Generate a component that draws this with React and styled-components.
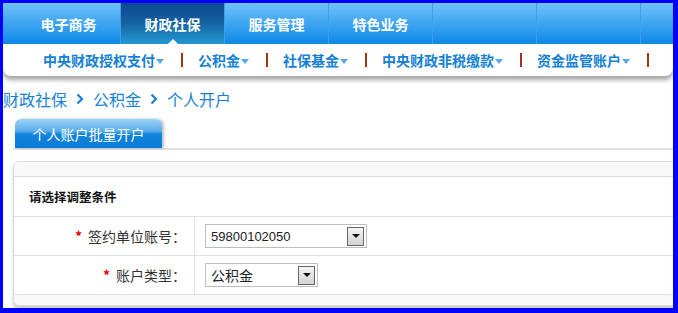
import styled, { createGlobalStyle } from "styled-components"

const GlobalStyle = createGlobalStyle`
    body {
        margin: 0;
        font-family: "Noto Sans CJK SC", "Liberation Sans", sans-serif;
        background: #fff;
    }
`

const Frame = styled.div`
    width: 678px;
    height: 313px;
    box-sizing: border-box;
    border-style: solid;
    border-color: #0000ff;
    border-width: 3px 5px 5px 3px;
    overflow: hidden;
    background: #fff;
`

const TopNav = styled.div`
    height: 41px;
    display: flex;
    padding-left: 14px;
    background: linear-gradient(#6ec1fa, #3aa2f0 55%, #0c88e6);
`

const NavItem = styled.div`
    position: relative;
    flex: 0 0 103px;
    border-right: 1px solid #3f9fe6;
    display: flex;
    align-items: center;
    justify-content: center;
    color: #fff;
    font-size: 14px;
    font-weight: bold;
    background: ${p => p.$active ? "linear-gradient(#0a4890, #15609f 45%, #2098d2)" : "transparent"};

    &::after {
        content: "";
        display: ${p => p.$active ? "block" : "none"};
        position: absolute;
        left: 50%;
        bottom: 0;
        margin-left: -5px;
        border-left: 5px solid transparent;
        border-right: 5px solid transparent;
        border-bottom: 5px solid #fff;
    }
`

const SubNav = styled.div`
    position: relative;
    height: 32px;
    display: flex;
    align-items: center;
    padding-left: 40px;
    background: #fff;
    border-radius: 0 0 8px 8px;
    box-shadow: 0 4px 4px rgba(0, 0, 0, 0.35);
`

const SubItem = styled.div`
    display: flex;
    align-items: center;
    color: #1581d6;
    font-size: 14px;
    font-weight: bold;
`

const Caret = styled.span`
    margin-left: 1px;
    margin-top: 2px;
    border-left: 4px solid transparent;
    border-right: 4px solid transparent;
    border-top: 5px solid #5aa7e6;
`

const SubSep = styled.span`
    width: 2px;
    height: 14px;
    margin: 0 15px 0 17px;
    background: #9a3a14;
`

const Crumbs = styled.div`
    margin-top: 11px;
    height: 24px;
    display: flex;
    align-items: center;
    gap: 9px;
    color: #1581d6;
    font-size: 16px;
`

const Body = styled.div`
    padding-left: 10px;
`

const TabBar = styled.div`
    margin-top: 8px;
    padding-left: 2px;
    display: flex;
    border-bottom: 2px solid #e0e0e0;
`

const Tab = styled.div`
    width: 147px;
    height: 29px;
    display: flex;
    align-items: center;
    justify-content: center;
    color: #fff;
    font-size: 14px;
    border-radius: 6px 6px 0 0;
    background: linear-gradient(#9ad2f6, #5aaeea 42%, #1284dc 52%, #0a7ad6);
    box-shadow: 2px 0 3px rgba(0, 0, 0, 0.25);
`

const Panel = styled.div`
    margin-top: 11px;
    width: 700px;
    border: 1px solid #dcdcdc;
    border-radius: 6px 0 0 6px;
    box-shadow: 0 3px 3px rgba(0, 0, 0, 0.2);
    background: #fff;
`

const Strip = styled.div`
    height: ${p => p.$h}px;
    background: #f8f8f8;
    border-radius: ${p => p.$top ? "6px 0 0 0" : "0 0 0 6px"};
    border-bottom: ${p => p.$top ? "1px solid #dcdcdc" : "none"};
`

const Title = styled.div`
    height: 39px;
    display: flex;
    align-items: center;
    padding-left: 15px;
    font-size: 12.5px;
    font-weight: bold;
    color: #111;
    border-bottom: 1px solid #e0e0e0;
`

const Row = styled.div`
    height: 38px;
    display: flex;
    border-bottom: 1px solid #e0e0e0;
`

const Label = styled.div`
    flex: 0 0 181px;
    box-sizing: border-box;
    border-right: 1px solid #e0e0e0;
    display: flex;
    align-items: center;
    justify-content: flex-end;
    padding-right: 8px;
    font-size: 14px;
    color: #333;

    b {
        color: #e00000;
        margin-right: 6px;
        font-size: 14px;
    }
`

const Cell = styled.div`
    display: flex;
    align-items: center;
    padding-left: 10px;
`

const SelectBox = styled.div`
    width: ${p => p.$w}px;
    height: 24px;
    box-sizing: border-box;
    border: 1px solid #bdbdbd;
    display: flex;
    align-items: center;
    justify-content: space-between;
    padding: 0 2px 0 5px;
    background: #fff;
    color: #222;
    font-size: ${p => p.$num ? "13px" : "14px"};
    font-family: ${p => p.$num ? '"Liberation Sans", Arial, sans-serif' : '"Noto Sans CJK SC", sans-serif'};
`

const DropBtn = styled.span`
    width: 17px;
    height: 19px;
    box-sizing: border-box;
    border: 1px solid #666;
    background: linear-gradient(#f4f4f4, #d2d2d2);
    display: flex;
    align-items: center;
    justify-content: center;

    &::before {
        content: "";
        border-left: 4px solid transparent;
        border-right: 4px solid transparent;
        border-top: 4px solid #111;
    }
`

function Chevron() {
    return (
        <svg width="8" height="12" viewBox="0 0 8 12">
            <polyline points="1.5,1.5 6,6 1.5,10.5" fill="none" stroke="#1581d6" strokeWidth="2.2" />
        </svg>
    )
}

const navs = ["电子商务", "财政社保", "服务管理", "特色业务", "", "", ""]
const subs = ["中央财政授权支付", "公积金", "社保基金", "中央财政非税缴款", "资金监管账户"]

export default function App() {
    return (
        <Frame>
            <GlobalStyle />
            <TopNav>
                {navs.map((n, i) => (
                    <NavItem key={i} $active={i === 1}>{n}</NavItem>
                ))}
            </TopNav>
            <SubNav>
                {subs.map(s => (
                    <SubItem key={s}>
                        {s}<Caret />
                        <SubSep />
                    </SubItem>
                ))}
            </SubNav>
            <Crumbs>
                <span>财政社保</span><Chevron />
                <span>公积金</span><Chevron />
                <span>个人开户</span>
            </Crumbs>
            <Body>
                <TabBar>
                    <Tab>个人账户批量开户</Tab>
                </TabBar>
                <Panel>
                    <Strip $top $h={14} />
                    <Title>请选择调整条件</Title>
                    <Row>
                        <Label><b>*</b>签约单位账号：</Label>
                        <Cell>
                            <SelectBox $w={162} $num>59800102050<DropBtn /></SelectBox>
                        </Cell>
                    </Row>
                    <Row>
                        <Label><b>*</b>账户类型：</Label>
                        <Cell>
                            <SelectBox $w={113}>公积金<DropBtn /></SelectBox>
                        </Cell>
                    </Row>
                    <Strip $h={10} />
                </Panel>
            </Body>
        </Frame>
    )
}
